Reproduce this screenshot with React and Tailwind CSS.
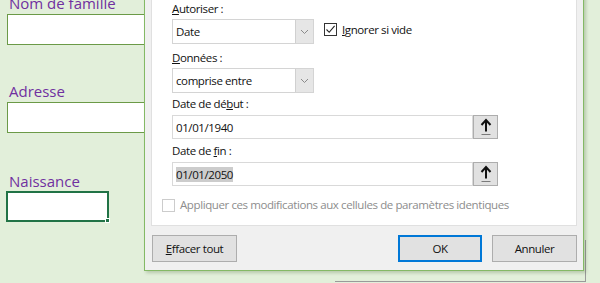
import React from "react";

const dlgFont = { fontFamily: '"Open Sans", "Noto Sans", sans-serif', letterSpacing: "-0.4px" };

function Chevron() {
  return (
    <svg width="9" height="6" viewBox="0 0 9 6">
      <polyline points="1,1 4.5,4.5 8,1" fill="none" stroke="#8a8a8a" strokeWidth="1" />
    </svg>
  );
}

function UpArrow() {
  return (
    <svg width="12" height="18" viewBox="0 0 12 18">
      <path d="M1.5 7 L6 2 L10.5 7" fill="none" stroke="#111" strokeWidth="2" />
      <path d="M6 2.5 V13.5" stroke="#111" strokeWidth="2" />
      <path d="M1.5 16.5 H10.5" stroke="#7a7a7a" strokeWidth="1" />
    </svg>
  );
}

function Combo({ value }) {
  return (
    <div className="flex h-[25px] w-[142px] border border-[#d4d4d4] bg-white">
      <div className="flex flex-1 items-center pl-[3px] text-[11.5px] text-[#111]">{value}</div>
      <div className="flex w-[18px] items-center justify-center border-l border-[#d0d0d0] bg-[#e6e6e6]">
        <Chevron />
      </div>
    </div>
  );
}

function RefInput({ value, selected }) {
  return (
    <div className="flex h-[24px] w-[326px]">
      <div className="flex flex-1 items-center border border-[#d9d9d9] bg-white pl-[3px] text-[11.5px] text-[#111]">
        <span className={selected ? "bg-[#cccccc] leading-[15px]" : "leading-[15px]"}>{value}</span>
      </div>
      <div className="flex w-[25px] items-center justify-center border border-[#adadad] bg-[#e1e1e1]">
        <UpArrow />
      </div>
    </div>
  );
}

function Label({ children, className = "" }) {
  return <div className={"h-[16px] text-[11.5px] leading-[16px] text-[#111] " + className}>{children}</div>;
}

function Btn({ children, focused, className = "" }) {
  return (
    <div
      className={
        "flex h-[27px] items-center justify-center text-[11.5px] text-[#111] bg-[#e1e1e1] " +
        (focused ? "border-2 border-[#0078d7] w-[84px] " : "border border-[#adadad] w-[85px] ") +
        className
      }
    >
      {children}
    </div>
  );
}

export default function App() {
  return (
    <div className="relative h-[283px] w-[600px] overflow-hidden bg-[#e2efda]">
      {/* Sheet content */}
      <div
        className="flex flex-col pl-[7px] text-[15px] text-[#7030a0]"
        style={{ fontFamily: '"Open Sans", "Noto Sans", sans-serif' }}
      >
        <div className="mt-[-7px] h-[20px] pl-[2px] leading-[20px]">Nom de famille</div>
        <div className="mt-[1px] h-[31px] w-[150px] border border-[#6b9a47] bg-white" />
        <div className="mt-[36px] h-[20px] pl-[2px] leading-[20px]">Adresse</div>
        <div className="mt-[1px] h-[31px] w-[150px] border border-[#6b9a47] bg-white" />
        <div className="mt-[38px] h-[20px] pl-[2px] leading-[20px]">Naissance</div>
        <div className="relative ml-[-1px] h-[31px] w-[103px] border-2 border-[#217346] bg-white">
          <div className="absolute bottom-[-3px] right-[-3px] h-[5px] w-[5px] border border-white bg-[#217346]" />
        </div>
      </div>

      {/* Frame behind dialog */}
      <div className="absolute left-[335px] top-[240px] h-[42px] w-[251px] border-b border-r border-[#9a9a9a]" />

      {/* Dialog */}
      <div
        className="absolute left-[144px] top-[-12px] flex w-[440px] flex-col border border-[#84b965] bg-[#f0f0f0] px-[6px] pb-[8px] shadow-[2px_2px_3px_rgba(60,90,40,0.25)]"
        style={dlgFont}
      >
        <div className="flex flex-col border border-[#e0e0e0] bg-white pb-[12px] pl-[20px] pt-[11px]">
          <Label>
            <span className="underline">A</span>utoriser :
          </Label>
          <div className="mt-[2px] flex items-start">
            <Combo value="Date" />
            <div className="ml-[10px] mt-[2px] flex items-center">
              <div className="flex h-[13px] w-[13px] items-center justify-center border border-[#333] bg-white">
                <svg width="11" height="11" viewBox="0 0 11 11">
                  <polyline points="1.5,5.5 4.2,8.3 9.6,1.8" fill="none" stroke="#222" strokeWidth="1.1" />
                </svg>
              </div>
              <span className="ml-[5px] text-[11.5px] text-[#111]">
                <span className="underline">I</span>gnorer si vide
              </span>
            </div>
          </div>
          <Label className="mt-[6px]">
            <span className="underline">D</span>onnées :
          </Label>
          <div className="mt-[2px]">
            <Combo value="comprise entre" />
          </div>
          <Label className="mt-[3px]">
            Date de dé<span className="underline">b</span>ut :
          </Label>
          <div className="mt-[3px]">
            <RefInput value="01/01/1940" />
          </div>
          <Label className="mt-[4px]">
            Date de <span className="underline">f</span>in :
          </Label>
          <div className="mt-[3px]">
            <RefInput value="01/01/2050" selected />
          </div>
          <div className="ml-[-10px] mt-[11px] flex h-[16px] items-center">
            <div className="h-[13px] w-[13px] border border-[#cccccc] bg-white" />
            <span className="ml-[5px] text-[11.5px] text-[#8d8d8d]">
              Appliquer ces modifications aux cellules de paramètres identiques
            </span>
          </div>
        </div>
        <div className="mt-[9px] flex items-center">
          <Btn className="ml-[1px]">
            <span>
              <span className="underline">E</span>ffacer tout
            </span>
          </Btn>
          <div className="flex-1" />
          <Btn focused>OK</Btn>
          <Btn className="ml-[10px]">Annuler</Btn>
        </div>
      </div>
    </div>
  );
}
